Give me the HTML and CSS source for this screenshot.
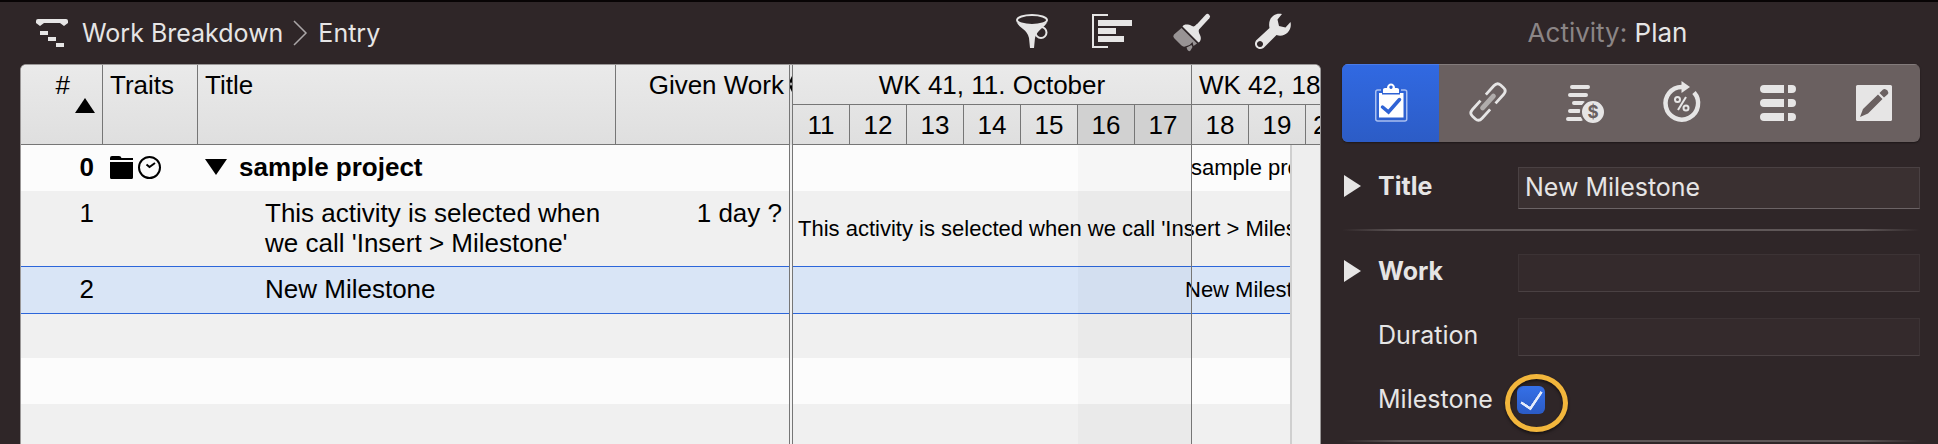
FILE: index.html
```html
<!DOCTYPE html>
<html lang="en">
<head>
    <meta charset="utf-8">
    <title>Work Breakdown</title>
    <link rel="stylesheet" href="styles.css">
</head>
<body>
    <main class="main">
        <header class="toolbar">
            <nav class="breadcrumb">
                <svg class="crumb-icon" width="32" height="28" viewBox="0 0 32 28" fill="currentColor">
                    <path d="M0 2Q0 0 2 0H30Q32 0 32 2V4L28 7L24 4H8L4 7L0 4z"/>
                    <path d="M4 12h8v4H4zM12 18h8v4h-8zM20 24h8v4h-8z"/>
                </svg>
                <a href="#">Work Breakdown</a>
                <svg class="chevron" width="14" height="26" viewBox="0 0 14 26" fill="none" stroke="currentColor" stroke-width="1.500">
                    <path d="M1 1L13 13L1 25"/>
                </svg>
                <a href="#">Entry</a>
            </nav>
            <div class="tools">
                <button aria-label="Filter">
                    <svg width="40" height="40" viewBox="0 0 40 40">
                        <ellipse cx="20" cy="7" rx="15" ry="5" fill="none" stroke="currentColor" stroke-width="2"/>
                        <path fill="currentColor" d="M4.500 9C8 16 15 16 17 25L18 35H22L23 25C25 17 32 15 35.500 9C30 13 10 13 4.500 9z"/>
                        <circle cx="29" cy="19.500" r="5.500" fill="none" stroke="currentColor" stroke-width="2"/>
                    </svg>
                </button>
                <button aria-label="Outline">
                    <svg width="40" height="40" viewBox="0 0 40 40">
                        <path d="M16 2H1V34H16" fill="none" stroke="currentColor" stroke-width="2"/>
                        <path fill="currentColor" d="M6 7h34v6H6zM6 15h18v6H6zM6 23h26v6H6z"/>
                    </svg>
                </button>
                <button aria-label="Style">
                    <svg width="40" height="40" viewBox="0 0 40 40">
                        <path d="M35.500 3.500L24 16" stroke="currentColor" stroke-width="5" stroke-linecap="round"/>
                        <path fill="currentColor" d="M10.500 13.500C12 11 16 11 20 13C22 14 23 13 25 11L28 14C26 17 26.500 19 28 22C30 26 28 29 26.500 29.500z"/>
                        <path class="bristles" d="M9.500 15L25 30.500L21.500 33L20.500 29L17.500 32L13 33.500Q11 34 9.500 32.500L2 25Q.500 23 2 21.500zM14.500 34.500L19.500 32L20.500 34L18.500 37.500Q17 39 15.500 37z"/>
                    </svg>
                </button>
                <button aria-label="Settings">
                    <svg width="40" height="40" viewBox="0 0 40 40">
                        <path fill="currentColor" fill-rule="evenodd" d="M30 1L25.500 6.500L27 13L33.500 14.500L38.500 9C40.500 17 33 25 24.500 22L11.500 35C6.500 38.500 .500 33 4 27.500L17.500 15C15.500 6 22-1 30 1zM8 28a3 3 0 1 0 .01 0z"/>
                    </svg>
                </button>
            </div>
        </header>

        <div class="panel">
            <table class="outline">
                <colgroup>
                    <col class="col-number">
                    <col class="col-traits">
                    <col>
                    <col class="col-work">
                </colgroup>
                <thead>
                    <tr>
                        <th class="number"><span class="hash">#</span><svg class="sort" width="20" height="15" viewBox="0 0 20 15"><path d="M10 0L20 15H0z"/></svg></th>
                        <th>Traits</th>
                        <th>Title</th>
                        <th class="number">Given Work</th>
                    </tr>
                </thead>
                <tbody>
                    <tr class="project">
                        <td class="number">0</td>
                        <td>
                            <div class="traits">
                                <svg width="23" height="23" viewBox="0 0 23 23"><path d="M0 2Q0 0 2 0H9Q11 0 11.500 2H23V4H0zM0 6H23V21.500Q23 23 21.500 23H1.500Q0 23 0 21.500z"/></svg>
                                <svg width="23" height="23" viewBox="0 0 23 23" fill="none" stroke="#000" stroke-width="2"><circle cx="11.500" cy="11.500" r="10.500"/><path d="M8.500 8.500L11.500 11L17 7"/></svg>
                            </div>
                        </td>
                        <td>
                            <div class="project-title">
                                <svg width="22" height="16" viewBox="0 0 22 16"><path d="M0 0H22L11 16z"/></svg>
                                sample project
                            </div>
                        </td>
                        <td></td>
                    </tr>
                    <tr>
                        <td class="number">1</td>
                        <td></td>
                        <td class="child">This activity is selected when<br>we call 'Insert &gt; Milestone'</td>
                        <td class="number">1 day ?</td>
                    </tr>
                    <tr class="selected">
                        <td class="number">2</td>
                        <td></td>
                        <td class="child">New Milestone</td>
                        <td></td>
                    </tr>
                    <tr class="short"><td colspan="4"></td></tr>
                    <tr><td colspan="4"></td></tr>
                    <tr><td colspan="4"></td></tr>
                </tbody>
            </table>

            <div class="splitter">
                <svg width="2" height="16" viewBox="0 0 2 16"><path d="M2 0V6L1 8L2 10V16L0 12V10L1 8L0 6V4z"/></svg>
            </div>

            <section class="timeline">
                <div class="scale">
                    <div class="week">
                        <div class="week-name">WK 41, 11. October</div>
                        <div class="days">
                            <span>11</span><span>12</span><span>13</span><span>14</span><span>15</span><span class="off">16</span><span class="off">17</span>
                        </div>
                    </div>
                    <div class="week">
                        <div class="week-name pinned">WK 42, 18. October</div>
                        <div class="days">
                            <span>18</span><span>19</span><span class="pinned">20</span>
                        </div>
                    </div>
                </div>
                <div class="chart">
                    <div class="lanes">
                        <div class="lane"><span class="label-project">sample project</span></div>
                        <div class="lane tall"><span class="label-activity">This activity is selected when we call 'Insert &gt; Milestone'</span></div>
                        <div class="lane selected"><span class="label-milestone">New Milestone</span></div>
                        <div class="lane short"></div>
                        <div class="lane"></div>
                        <div class="lane"></div>
                        <div class="weekend"></div>
                    </div>
                    <div class="gutter"></div>
                </div>
            </section>
        </div>
    </main>

    <aside class="inspector">
        <h2 class="inspector-title"><span>Activity:</span> Plan</h2>

        <div class="tabs">
            <button class="active" aria-label="Plan">
                <svg width="40" height="40" viewBox="0 0 40 40">
                    <rect class="frame" x="4.750" y="8" width="31" height="31" rx="2"/>
                    <path class="cut" d="M10 5H30V12H10z"/>
                    <path fill="#fff" d="M8 11H32.500V35.500H8z"/>
                    <path class="cut" d="M11 10H29V12.500H11z"/>
                    <path fill="#fff" fill-rule="evenodd" d="M12 11V7.500Q12 6 14 6H16C16 0 24 0 24 6H26Q28 6 28 7.500V11zM20 3.500a1.700 1.700 0 1 0 .01 0z"/>
                    <path class="check" d="M11.500 25L17.500 30L28.500 17.500"/>
                </svg>
            </button>
            <button aria-label="Links">
                <svg width="40" height="40" viewBox="0 0 40 40" fill="none" stroke="currentColor" stroke-width="2.800">
                    <g transform="rotate(-48 20 20)">
                        <path d="M24 13.500H36Q41 13.500 41 18V22Q41 26.500 36 26.500H24M16 13.500H4Q-1 13.500 -1 18V22Q-1 26.500 4 26.500H16"/>
                        <path class="bar" d="M12 20H28"/>
                    </g>
                </svg>
            </button>
            <button aria-label="Costs">
                <svg width="40" height="40" viewBox="0 0 40 40">
                    <path d="M7 5H23M5 13H21M9 21H18M5 29H14M3 37H16" stroke="currentColor" stroke-width="4" stroke-linecap="round"/>
                    <circle class="coin" cx="28" cy="30" r="12"/>
                    <text x="28" y="36" class="sign">$</text>
                </svg>
            </button>
            <button aria-label="Progress">
                <svg width="40" height="40" viewBox="0 0 40 40">
                    <path d="M32 10.500A16.300 16.300 0 1 1 20 5" fill="none" stroke="currentColor" stroke-width="4.500"/>
                    <path fill="currentColor" d="M19.500-1L28 5L19.500 11z"/>
                    <g fill="none" stroke="currentColor" stroke-width="2"><circle cx="15.500" cy="17.500" r="2.500"/><circle cx="24" cy="26" r="2.500"/><path d="M24 15L16 28"/></g>
                </svg>
            </button>
            <button aria-label="Fields">
                <svg width="40" height="40" viewBox="0 0 40 40" fill="currentColor">
                    <path d="M25 3v8H5a4 4 0 0 1 0-8zM25 17v8H5a4 4 0 0 1 0-8zM25 31v8H5a4 4 0 0 1 0-8z"/>
                    <path d="M29 3h4a4 4 0 0 1 0 8h-4zM29 17h4a4 4 0 0 1 0 8h-4zM29 31h4a4 4 0 0 1 0 8h-4z"/>
                </svg>
            </button>
            <button aria-label="Notes">
                <svg width="40" height="40" viewBox="0 0 40 40">
                    <rect x="2" y="3" width="36" height="36" rx="1.500" fill="currentColor"/>
                    <path class="pencil" d="M6 35L9 27L24 12.500L28.500 17L14 31.500zM25.500 11L29 7.500Q31 6 33.500 8.500Q35 10.500 33.500 12.500L30 15.500z"/>
                </svg>
            </button>
        </div>

        <form class="fields">
            <div class="field">
                <svg class="disclosure" width="17" height="22" viewBox="0 0 17 22"><path d="M0 0L17 11L0 22z"/></svg>
                <label class="strong" for="title">Title</label>
                <input class="text filled" id="title" type="text" value="New Milestone">
            </div>
            <hr>
            <div class="field">
                <svg class="disclosure" width="17" height="22" viewBox="0 0 17 22"><path d="M0 0L17 11L0 22z"/></svg>
                <label class="strong" for="work">Work</label>
                <input class="text" id="work" type="text" disabled>
            </div>
            <div class="field">
                <label for="duration">Duration</label>
                <input class="text" id="duration" type="text" disabled>
            </div>
            <div class="field">
                <label for="milestone">Milestone</label>
                <div class="check-wrap">
                    <input class="checkbox" id="milestone" type="checkbox" checked>
                    <span class="ring"></span>
                </div>
            </div>
            <hr>
        </form>
    </aside>
</body>
</html>
```
FILE: styles.css
```css
* {
    box-sizing: border-box;
}

body {
    display: flex;
    height: 100vh;
    margin: 0;
    overflow: hidden;
    border-top: 2px solid #080405;
    background: #2f2628;
    color: #e6e5e5;
    font-family: Inter, sans-serif;
    font-size: 25px;
}

button {
    padding: 0;
    border: none;
    background: none;
    color: inherit;
    font: inherit;
}

svg {
    display: block;
    flex: none;
    overflow: visible;
}

.main {
    display: flex;
    flex: 1;
    flex-direction: column;
    min-width: 0;
    padding-left: 20px;
}

.toolbar {
    display: flex;
    flex: none;
    align-items: center;
    justify-content: space-between;
    height: 62px;
    padding: 0 29px 0 16px;
}

.breadcrumb {
    display: flex;
    align-items: center;
}

.breadcrumb a {
    color: inherit;
    text-decoration: none;
}

.crumb-icon {
    margin-right: 14px;
}

.chevron {
    margin: 0 11px 0 10px;
    color: #aaa6a7;
}

.tools {
    display: flex;
    gap: 40px;
}

.bristles {
    fill: #989394;
}

/* outline and timeline */

.panel {
    display: flex;
    flex: 1;
    min-height: 0;
    overflow: hidden;
    border: 1px solid #9a9797;
    border-bottom: none;
    border-radius: 6px 6px 0 0;
    background: #fcfcfc;
    color: #000;
    font-family: "Liberation Sans", Arial, sans-serif;
    font-size: 26px;
    line-height: 30px;
}

.outline {
    flex: none;
    align-self: flex-start;
    width: 768px;
    border-spacing: 0;
    table-layout: fixed;
}

.col-number {
    width: 82px;
}

.col-traits {
    width: 95px;
}

.col-work {
    width: 173px;
}

.outline th {
    height: 80px;
    padding: 5px 7px 0;
    border-right: 1px solid #767676;
    border-bottom: 1px solid #767676;
    background: linear-gradient(#eaeaea, #dfdfdf);
    font-weight: normal;
    text-align: left;
    vertical-align: top;
}

.outline th:last-child {
    padding-right: 5px;
    border-right: none;
}

.outline td {
    height: 46px;
    padding: 7px 7px 8px;
    vertical-align: top;
}

.outline td:first-child {
    padding-right: 9px;
}

.outline .number {
    text-align: right;
}

.outline .child {
    padding-left: 67px;
}

.hash {
    margin-right: 25px;
}

.sort {
    margin: -2px 0 0 auto;
}

.outline tbody tr:nth-child(even),
.lane:nth-child(even) {
    background: #f0f0f0;
}

.outline tbody tr.selected,
.lane.selected {
    background: #d9e5f6;
}

.outline .selected td,
.lane.selected {
    box-shadow: inset 0 1px #2c66da, inset 0 -1px #2c66da;
}

.outline .selected td {
    height: 48px;
    padding-top: 8px;
}

.outline .short td {
    height: 44px;
}

.project {
    font-weight: bold;
}

.traits {
    display: flex;
    align-items: center;
    gap: 5px;
    height: 30px;
}

.project-title {
    display: flex;
    align-items: center;
    gap: 12px;
}

.splitter {
    flex: none;
    width: 4px;
    padding-top: 11px;
    border: solid #767676;
    border-width: 0 1px;
    background: linear-gradient(#e4e4e4, #dfdfdf 80px, #f2f2f2 80px);
}

.timeline {
    display: flex;
    flex: 1;
    flex-direction: column;
    min-width: 0;
}

.scale {
    display: flex;
    flex: none;
    height: 80px;
    overflow: hidden;
    border-bottom: 1px solid #767676;
    background: linear-gradient(#eaeaea, #dfdfdf);
}

.week {
    flex: none;
    width: 399px;
}

.week-name {
    height: 40px;
    padding-top: 5px;
    border-right: 1px solid #767676;
    border-bottom: 1px solid #767676;
    text-align: center;
}

.days {
    display: flex;
}

.days span {
    width: 57px;
    height: 39px;
    padding-top: 5px;
    border-right: 1px solid #767676;
    text-align: center;
}

/* name stays at the left edge while its cell runs out of view */
.week .pinned {
    padding-left: 7px;
    text-align: left;
}

.days .off {
    background: #d1d1d1;
}

.chart {
    display: flex;
    flex: 1;
    min-height: 0;
}

.lanes {
    position: relative;
    flex: 1;
    min-width: 0;
    overflow: hidden;
    font-size: 22px;
    white-space: nowrap;
}

.lane {
    display: flex;
    align-items: center;
    height: 46px;
}

.lane.tall {
    height: 75px;
}

.lane.selected {
    height: 48px;
}

.lane.short {
    height: 44px;
}

.label-project {
    margin-left: 398px;
}

.label-activity {
    margin-left: 5px;
}

.label-milestone {
    margin-left: 392px;
}

.weekend {
    position: absolute;
    top: 0;
    bottom: 0;
    left: 285px;
    width: 114px;
    border-right: 1px solid #767676;
    background: rgba(0, 0, 0, 0.025);
}

.gutter {
    flex: none;
    width: 30px;
    border-left: 2px solid #cfcfcf;
    background: #eeeeee;
}

/* inspector */

.inspector {
    flex: none;
    width: 617px;
    padding: 0 18px 0 21px;
}

.inspector-title {
    height: 62px;
    margin: 0;
    padding-right: 47px;
    font-size: 26px;
    font-weight: normal;
    line-height: 62px;
    text-align: center;
}

.inspector-title span {
    color: #8b8586;
}

.tabs {
    display: flex;
    height: 78px;
    overflow: hidden;
    border-radius: 6px;
    background: #6a6060;
    box-shadow: 0 1px 2px rgba(0, 0, 0, 0.4);
}

.tabs button {
    display: flex;
    flex: 0 1 97px;
    align-items: center;
    justify-content: center;
    padding-bottom: 2px;
    box-shadow: inset 0 1px #837b7b;
}

.tabs .active {
    background: linear-gradient(#3169e2, #2c5cc6);
    box-shadow: inset 0 1px #4a7be8;
}

.tabs button:not(:last-child) {
    flex-shrink: 0;
}

.frame {
    fill: none;
    stroke: #a9bff0;
    stroke-width: 1.5px;
}

.cut {
    fill: #2f63d5;
}

.check {
    fill: none;
    stroke: #2f63d5;
    stroke-width: 3.5px;
    stroke-linecap: round;
}

.bar {
    stroke: #b0acab;
    stroke-width: 5px;
    stroke-linecap: round;
}

.coin {
    fill: #e6e5e5;
    stroke: #6a6060;
    stroke-width: 2px;
}

.sign {
    fill: #6a6060;
    font-size: 17px;
    font-weight: bold;
    text-anchor: middle;
}

.pencil {
    fill: #6a6060;
}

.fields {
    padding-top: 25px;
}

.field {
    display: grid;
    grid-template-columns: 36px 140px 1fr;
    align-items: center;
    min-height: 38px;
    margin-bottom: 26px;
}

.field:has(+ hr) {
    margin-bottom: 20px;
}

.disclosure {
    margin: 0 0 4px 2px;
    fill: #e6e5e5;
}

.field label {
    grid-column: 2;
    padding-bottom: 4px;
}

.strong {
    font-weight: bold;
}

.text {
    width: 100%;
    height: 38px;
    padding: 0 6px 2px;
    border: 1px solid #3c3335;
    border-bottom-color: #4a4143;
    background: #342a2c;
    color: inherit;
    font: inherit;
}

.text.filled {
    height: 42px;
    border-color: #4a4143;
    border-bottom-color: #6b6365;
    background: #3a3031;
}

hr {
    height: 2px;
    margin: 0 0 23px;
    border: none;
    background: linear-gradient(to right, transparent, #5f5758 10%, #5f5758 90%, transparent);
}

.check-wrap {
    position: relative;
    margin: 0 0 2px -1px;
}

.checkbox {
    display: flex;
    align-items: center;
    justify-content: center;
    width: 28px;
    height: 28px;
    margin: 0;
    border-radius: 6px;
    background: linear-gradient(#3570e8, #2b5bc5);
    appearance: none;
}

.checkbox::before {
    width: 10px;
    height: 19px;
    margin-top: -5px;
    border: solid #e6ecfb;
    border-width: 0 3px 3px 0;
    border-radius: 1px;
    content: "";
    transform: rotate(34deg);
}

/* highlight drawn round the tick box */
.ring {
    position: absolute;
    top: -12px;
    left: -12px;
    width: 63px;
    height: 58px;
    border: 5px solid #f2b63c;
    border-radius: 50%;
    box-shadow: 0 2px 3px rgba(0, 0, 0, 0.5), inset 0 2px 3px rgba(0, 0, 0, 0.5);
    pointer-events: none;
}
```
